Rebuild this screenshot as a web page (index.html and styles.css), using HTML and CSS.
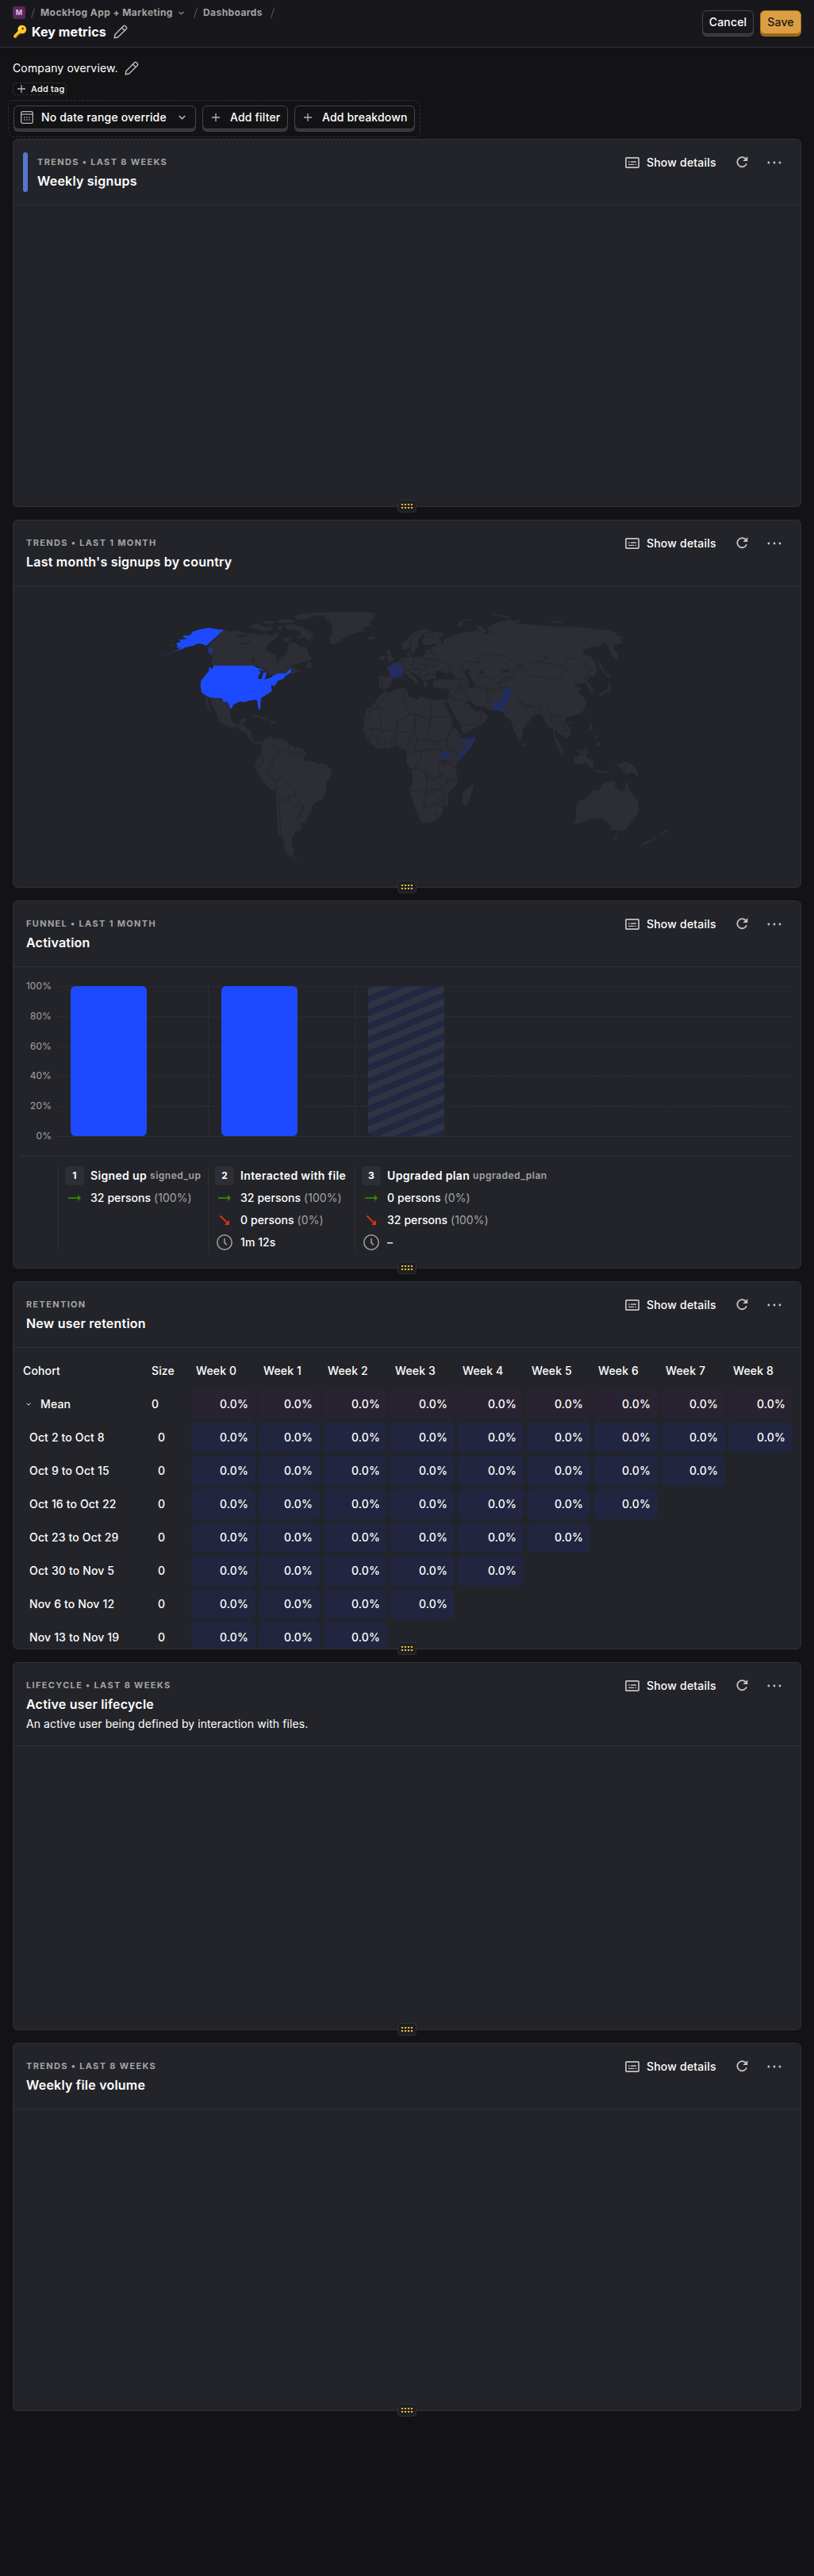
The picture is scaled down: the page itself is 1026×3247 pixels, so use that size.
FILE: index.html
```html
<!DOCTYPE html>
<html lang="en">
<head>
<meta charset="utf-8">
<title>Key metrics</title>
<link rel="stylesheet" href="styles.css">
</head>
<body>
<svg class="defs" width="0" height="0">
  <symbol id="pencil" viewBox="0 0 18 18"><path d="M1.2 16.8 2 12.4 12.6 1.8a1.6 1.6 0 0 1 2.2 0l1.4 1.4a1.6 1.6 0 0 1 0 2.2L5.6 16 1.2 16.8ZM10.4 4l3.6 3.6" fill="none" stroke="currentColor" stroke-width="1.4" stroke-linejoin="round"/></symbol>
  <symbol id="plus" viewBox="0 0 10 10"><path d="M5 0v10M0 5h10" stroke="currentColor" stroke-width="1.3"/></symbol>
  <symbol id="chevron" viewBox="0 0 8 5"><path d="m.7.7 3.3 3.3L7.3.7" fill="none" stroke="currentColor" stroke-width="1.3"/></symbol>
  <symbol id="calendar" viewBox="0 0 16 16"><rect x=".7" y=".7" width="14.6" height="14.6" rx="1.8" fill="none" stroke="currentColor" stroke-width="1.3"/><path d="M1 4h14" stroke="currentColor" stroke-width="1.2"/><path d="M7.2 8h1.4M10.4 8h1.4M4 11h1.4M7.2 11h1.4M10.4 11h1.4M4 8h1.4" stroke="currentColor" stroke-width="1.4"/></symbol>
  <symbol id="details" viewBox="0 0 18 14"><rect x=".9" y=".9" width="16.2" height="12.2" rx="1" fill="none" stroke="currentColor" stroke-width="1.7"/><path d="M4 6h1.6M7 6h7M4 9.4h7M12.2 9.4H14" stroke="currentColor" stroke-width="1.4"/></symbol>
  <symbol id="refresh" viewBox="0 0 15 15"><path d="M13 9.2A6 6 0 1 1 11.8 3.2" fill="none" stroke="currentColor" stroke-width="1.8"/><path d="M14.3 0v6H8.4Z" fill="currentColor"/></symbol>
  <symbol id="dots" viewBox="0 0 18 4"><g fill="currentColor"><circle cx="1.9" cy="2" r="1.4"/><circle cx="9" cy="2" r="1.4"/><circle cx="16" cy="2" r="1.4"/></g></symbol>
  <symbol id="right" viewBox="0 0 16 8"><path d="M0 4h13" stroke="currentColor" stroke-width="1.8"/><path d="m12 0 4 4-4 4Z" fill="currentColor"/></symbol>
  <symbol id="down" viewBox="0 0 12 12"><path d="m.5.5 9 9" stroke="currentColor" stroke-width="1.9"/><path d="M12 6v6H6Z" fill="currentColor"/></symbol>
  <symbol id="clock" viewBox="0 0 20 20"><circle cx="10" cy="10" r="9.2" fill="none" stroke="currentColor" stroke-width="1.5"/><path d="M10 5v5.4l2.8 2.8" fill="none" stroke="currentColor" stroke-width="1.5"/></symbol>
  <symbol id="grip" viewBox="0 0 16 6"><path d="M0 .5h16M0 4.5h16" stroke="#46413a"/><path fill="#f7b72e" d="M1 0h2v2H1zM5 0h2v2H5zM9 0h2v2H9zM13 0h2v2h-2zM1 4h2v2H1zM5 4h2v2H5zM9 4h2v2H9zM13 4h2v2h-2z"/></symbol>
</svg>

<header class="top">
  <div class="top-left">
    <nav class="crumbs">
      <span class="project">M</span><i class="slash s1"></i><span class="c1">MockHog App + Marketing</span><svg class="chev"><use href="#chevron"/></svg><i class="slash s2"></i><span class="c2">Dashboards</span><i class="slash s3"></i>
    </nav>
    <h1 class="title"><span class="key">🔑</span><span class="title-text">Key metrics</span><svg class="pencil"><use href="#pencil"/></svg></h1>
  </div>
  <div class="top-actions"><button class="btn cancel">Cancel</button><button class="btn save">Save</button></div>
</header>

<main class="page">
  <div class="description"><span class="desc-text">Company overview.</span><svg class="pencil"><use href="#pencil"/></svg></div>
  <div class="tag"><svg><use href="#plus"/></svg><span>Add tag</span></div>
  <div class="filters">
    <button class="btn date"><svg class="cal"><use href="#calendar"/></svg><span>No date range override</span><svg class="chev"><use href="#chevron"/></svg></button>
    <button class="btn filter"><svg class="plus"><use href="#plus"/></svg><span>Add filter</span></button>
    <button class="btn breakdown"><svg class="plus"><use href="#plus"/></svg><span>Add breakdown</span></button>
  </div>

  <section class="card">
    <div class="head"><i class="ribbon"></i><div class="meta ribboned"><h5>Trends • Last 8 weeks</h5><h4>Weekly signups</h4></div>
      <div class="tools"><svg class="i-details"><use href="#details"/></svg><span>Show details</span><svg class="i-refresh"><use href="#refresh"/></svg><svg class="i-dots"><use href="#dots"/></svg></div></div>
    <div class="grip"><svg><use href="#grip"/></svg></div>
  </section>

  <section class="card">
    <div class="head"><div class="meta"><h5>Trends • Last 1 month</h5><h4>Last month's signups by country</h4></div>
      <div class="tools"><svg class="i-details"><use href="#details"/></svg><span>Show details</span><svg class="i-refresh"><use href="#refresh"/></svg><svg class="i-dots"><use href="#dots"/></svg></div></div>
    <svg class="map" viewBox="-549 -33 2976 1137">
      <g class="land">
        <!-- Canada -->
        <path d="M246 132 270 138 285 133 310 136 330 148 360 146 385 152 400 145 420 152 440 150 445 138 455 150 440 165 420 180 407 195 405 208 425 218 446 226 444 246 452 253 462 235 480 225 492 205 488 190 498 178 515 180 530 188 537 200 552 192 562 205 565 225 582 238 570 248 540 255 520 262 500 268 505 275 522 272 518 282 545 285 520 292 505 300 501 280 490 285 480 296 450 297 435 300 415 310 412 292 400 280 370 268H207L196 252 204 240 200 210 188 196Z"/>
        <path d="M342 120 365 108 385 112 400 120 425 118 435 128 415 137 390 136 375 128 358 130ZM385 105 410 97 432 98 440 106 415 110ZM440 100 470 92 500 92 520 98 500 105 460 106ZM510 80 545 70 600 66 625 68 600 78 570 86 545 94 520 90ZM480 112 515 112 545 122 575 140 590 152 575 158 580 170 565 172 552 160 530 165 520 158 540 150 530 138 510 130 490 132 475 122ZM445 120 465 115 470 128 455 133ZM468 165 490 160 500 172 480 177ZM560 262 572 250 582 270 568 275 555 272ZM525 75 560 70 590 72 560 80Z"/>
        <!-- Greenland and Iceland -->
        <path d="M580 72 625 66 700 64 780 63 820 70 812 90 795 105 805 112 785 120 765 130 782 134 740 145 715 155 695 165 680 180 662 187 648 180 646 165 652 150 660 138 650 130 656 115 648 98 632 92 625 80ZM785 160 800 156 820 156 822 163 803 170 792 167Z"/>
        <!-- Mexico, Central America, Caribbean -->
        <path d="M190 386 215 390 240 392 247 405 262 402 272 428 270 455 278 478 290 487 305 485 312 470 334 464 328 480 318 490 335 505 350 510 350 530 355 548 370 557 385 553 388 560 372 563 362 560 340 540 328 520 308 512 300 502 280 500 250 492 225 475 222 455 207 430 198 405ZM175 384 184 387 190 415 200 447 190 438 178 405ZM348 459 370 453 390 460 412 473 400 473 378 460ZM418 477 440 480 448 484 425 487Z"/>
        <!-- South America -->
        <path d="M388 560 400 545 418 535 430 537 440 543 465 542 490 555 497 568 515 577 542 578 557 600 548 622 558 632 572 625 600 638 630 640 645 652 655 665 652 685 635 705 632 740 625 760 617 775 590 785 578 800 578 820 565 840 557 862 535 862 528 852 543 880 533 892 512 893 517 908 502 920 508 940 500 955 515 960 505 990 490 985 475 960 465 920 456 910 450 890 447 830 445 770 440 745 405 720 385 690 363 652 370 620 388 600 390 575ZM500 988 520 998 538 1006 515 1002Z"/>
        <!-- Africa -->
        <path d="M855 362 872 368 900 354 938 352 940 365 945 372 942 384 962 388 975 397 990 385 1005 388 1035 396 1085 397 1092 408 1078 404 1098 445 1108 478 1115 500 1135 520 1148 540 1165 545 1198 534 1195 550 1180 575 1160 600 1135 627 1120 650 1128 680 1130 712 1115 730 1095 750 1094 770 1095 795 1077 802 1070 830 1050 850 1035 858 995 862 985 840 970 810 955 760 950 735 962 700 955 660 938 640 937 600 935 585 915 580 900 570 870 578 825 582 800 560 775 520 770 510 778 490 775 460 790 430 805 420 820 405 830 385 845 375ZM1188 708 1190 725 1170 790 1155 798 1147 785 1152 740 1175 728Z"/>
        <!-- Eurasia -->
        <path d="M845 356 833 345 835 325 830 309 845 305 875 312 872 292 862 270 875 268 882 262 896 255 910 250 920 238 945 234 940 220 950 215 952 232 965 235 1000 232 1010 222 1012 208 1030 206 1028 198 1060 190 1050 188 1042 178 1048 172 1035 150 1040 138 1060 140 1085 150 1070 155 1055 152 1065 165 1072 180 1060 182 1075 188 1078 168 1095 162 1120 150 1150 142 1200 135 1220 142 1197 118 1205 114 1225 122 1240 135 1225 150 1248 142 1262 146 1240 128 1255 118 1275 108 1300 98 1325 92 1345 98 1370 94 1355 112 1385 110 1450 115 1500 120 1540 118 1600 123 1650 130 1700 132 1730 145 1742 158 1765 160 1745 168 1757 178 1725 190 1720 200 1737 228 1737 250 1710 222 1700 195 1690 180 1660 198 1640 195 1610 205 1602 226 1630 230 1650 250 1658 285 1648 305 1630 310 1618 325 1635 345 1647 360 1635 368 1620 345 1613 330 1600 335 1575 335 1570 345 1590 348 1598 355 1590 370 1617 400 1612 430 1592 450 1560 460 1545 460 1535 475 1555 505 1557 530 1540 545 1530 532 1512 525 1498 505 1500 535 1517 565 1532 595 1525 603 1508 575 1498 550 1490 500 1475 500 1460 475 1450 455 1435 450 1412 458 1400 480 1378 505 1375 540 1365 557 1345 515 1330 470 1315 465 1300 440 1255 435 1225 420 1200 420 1172 395 1168 400 1185 430 1205 440 1215 436 1225 440 1247 460 1230 485 1200 500 1155 525 1147 515 1140 490 1115 450 1090 400 1095 385 1098 356 1070 352 1040 350 1036 328 1060 320 1030 315 1012 322 1015 350 1003 345 1002 330 990 312 975 300 955 292 958 302 985 325 975 338 965 325 945 308 930 295 922 304 895 312 882 318 882 330 870 347 860 354Z"/>
        <!-- Scandinavia and northern islands -->
        <path d="M920 205 922 182 945 165 960 145 985 133 1015 130 1035 138 1035 155 1048 172 1038 186 1000 190 996 172 1008 155 998 150 982 168 982 190 970 212 958 222 950 198 935 206ZM1128 115 1140 98 1180 90 1190 93 1150 102 1142 125ZM1260 70 1330 82 1320 86 1270 78ZM1480 97 1530 98 1520 106 1485 103Z"/>
        <!-- British Isles -->
        <path d="M862 208 876 206 872 216 880 230 890 240 885 250 860 254 872 245 862 236 870 228 862 222ZM838 232 855 230 854 245 835 250Z"/>
        <!-- Asian islands -->
        <path d="M1650 238 1675 265 1692 295 1710 305 1700 312 1685 300 1665 265ZM1700 325 1712 350 1710 362 1690 368 1672 385 1665 375 1685 362 1698 355ZM1622 435 1627 442 1622 457ZM1552 480 1562 478 1560 486 1554 487ZM1378 555 1392 565 1388 573 1380 570ZM1578 578 1600 592 1635 630 1645 655 1630 652 1600 615ZM1640 660 1680 666 1712 672 1700 676 1655 668ZM1568 615 1590 605 1612 575 1625 590 1615 610 1610 635 1600 642 1575 635ZM1632 630 1650 625 1640 638 1648 652 1638 650 1632 655ZM1628 485 1640 490 1640 510 1630 508ZM1655 560 1668 552 1672 570 1660 572ZM1645 525 1662 540 1655 548ZM1730 642 1745 638 1760 630 1790 640 1805 655 1818 690 1800 678 1785 670 1770 682 1755 665ZM1708 623 1720 622 1718 632Z"/>
        <!-- Australia and New Zealand -->
        <path d="M1770 698 1780 735 1788 750 1812 780 1816 805 1810 830 1785 860 1765 888 1740 893 1728 888 1710 890 1705 865 1690 855 1675 842 1640 845 1615 855 1590 865 1570 863 1578 845 1577 800 1585 782 1620 765 1640 742 1650 735 1665 742 1675 718 1690 710 1710 700 1728 705 1725 725 1750 745 1762 738ZM1720 912 1737 912 1735 918 1720 928ZM1915 885 1925 892 1905 908 1895 912 1905 898ZM1885 912 1882 918 1840 945 1825 947 1830 940 1860 925Z"/>
      </g>
      <!-- Inland seas -->
      <path class="sea" d="M1045 300 1055 285 1075 288 1082 298 1105 292 1128 312 1130 318 1090 320 1050 318ZM1150 285 1175 280 1182 290 1168 292 1185 320 1198 335 1195 350 1175 350 1170 325ZM1213 290 1225 282 1227 295 1215 300ZM1460 222 1470 238 1455 248 1447 250 1462 238ZM1295 288 1328 282 1328 288 1300 295ZM298 152 335 150 320 158 300 160ZM305 185 350 175 345 182 315 188ZM355 238 365 233 360 258 353 255ZM1073 628 1092 620 1090 632 1075 640ZM1096 688 1094 720 1088 710Z"/>
      <g class="hot">
        <path d="M246 132 180 192 168 186 150 183 130 192 100 198 90 204 70 210 72 206 84 200 66 198 73 192 65 182 85 178 75 170 110 165 92 160 95 154 118 152 130 138 155 130 190 124 215 128Z"/>
        <path d="M207 267H358L372 275 385 278 409 290 405 312 398 320 425 312 435 303 450 297 480 296 490 285 501 280V293L480 305 472 317 450 325 447 332 438 345 425 340 428 362 420 370 400 382 387 390 385 412 385 430 378 434 374 412 373 398 362 396 340 400 325 405 308 403 290 410 280 417 278 429 270 428 265 410 255 402 247 407 238 389 215 390 185 385 178 380 162 368 158 345 160 325 175 305 190 287 190 272 204 280Z"/>
        <path d="M186 196 193 205 202 195 203 220 194 225 187 212ZM70 208 50 216 48 219 70 212ZM42 218 28 223 28 225 42 221ZM22 226 12 229 12 231 22 228ZM46 190 56 190 56 193 46 193Z" class="islands"/>
      </g>
      <path class="sea" d="M375 283 405 287 409 292 396 294 388 318 378 318 376 308 386 292ZM402 318 408 295 412 302 428 302 425 308Z"/>
      <path class="warm" d="M862 270 875 268 882 262 896 255 908 264 928 270 923 285 920 300 923 307 908 312 895 309 875 312 872 292ZM1257 407 1285 404 1305 380 1310 355 1328 353 1335 368 1328 375 1330 388 1320 405 1305 418 1312 440 1300 443 1290 434 1257 434 1262 420ZM1146 540 1165 545 1198 534 1195 550 1180 575 1160 600 1137 627 1135 595 1160 580 1178 562 1158 555ZM1072 592 1093 589 1098 605 1090 615 1065 624 1066 605ZM932 313h3v6h-3ZM1810 168h8v3h-8Z"/>
      <g class="borders">
        <path d="M388 610 410 620 432 640 430 650 412 660 415 685 442 700 443 745M432 640 433 605 450 600M420 540 415 555 425 570 450 575 452 600 470 610 475 590 495 582 490 562M495 582 502 605 520 602 545 600M515 577 516 600M533 580 532 600M442 700 460 690 495 718 518 745 515 760 495 758 490 775 462 775M445 745 460 778 455 810 460 860 462 915 478 950M490 775 515 795 545 815 540 790 518 770 515 758M545 815 528 840 530 855M545 790 548 810 532 830 558 850M370 650 382 652 398 630 385 612M290 500 300 490 318 490M328 515 350 508"/>
        <path d="M870 368 862 385 828 405 825 415 903 478 950 450 930 400 926 370M775 460 795 460 802 432 825 430V415M825 415 838 440 840 508 800 508 776 500M903 478 898 510 850 515 830 540 805 530 800 510M898 518 960 520 968 480 972 450 950 450M972 450 1028 475V395M1028 460 1098 460M1028 475 1018 510 1022 545 1040 555 1090 550 1088 530 1100 530 1112 485M968 480 970 530 980 548 1018 545M960 520 940 575M900 520 895 570M877 545V575M886 540V570M858 545 855 578M828 545 826 570M805 530 795 545 805 560M980 548 970 570 972 590 938 600M972 590 995 590 990 620 970 650 955 658M995 590 1018 582 1050 582 1072 590M1040 555 1070 582M1090 550 1092 588 1120 588 1135 595M1100 520 1090 550M1115 520 1148 540M1120 588 1118 600M1065 625 1060 655 1065 680 1052 700 1030 695 1012 690 1010 670 985 658 955 658M1015 672 1012 738 952 742M1065 628 1095 632 1122 650M1065 680 1092 690 1090 700 1130 698M1052 680 1085 712 1060 735 1012 738M1040 740 1022 748 1005 750 1002 810M1002 805 1035 795 1075 775 1082 740 1060 735M1035 745 1060 770 1080 780 1075 802M980 820 1002 820M1050 822 1058 828 1048 838 1042 830 1050 822M1066 805 1075 806"/>
        <path d="M832 320 848 320 842 350M923 305 935 282 928 268 920 245M935 290 965 280 1010 285M963 235 965 265 950 262 980 278M1000 235 1015 255 1010 265 975 260M985 290 1000 310 1020 300M1008 275 1020 300 1045 302M1010 265 1050 270M1012 240 1055 245 1045 222 1015 218M1030 205 1035 222M1055 245 1105 265 1100 290M1010 318 1000 325M1035 325 1010 322M950 200 955 170 985 145 1000 148 1010 140 1030 142 1038 155M1138 320 1140 345 1100 355M1098 380 1130 365 1140 345 1158 370 1168 395M1098 385 1145 400 1200 425M1145 500 1155 492 1200 488 1220 470 1218 445M1130 315 1165 325M1148 335 1172 350 1200 345 1245 362 1243 400 1260 406M1245 362 1290 350 1310 352M1147 285 1145 265 1160 250 1210 255 1212 235 1250 222 1310 232 1350 262 1365 265 1350 290 1340 310 1300 318 1285 335 1260 320 1230 305 1203 310M1202 325 1245 360M1290 348 1280 330 1320 325 1340 310M1310 352 1320 345M1335 360 1355 380 1365 405 1410 420 1440 420 1460 408 1475 420 1480 450 1500 455M1370 400 1375 415 1415 428M1420 425 1430 450M1445 425 1440 450M1365 265 1380 262 1425 250 1500 262 1530 275 1555 280 1530 295 1520 310 1490 318 1440 310 1400 302 1380 280 1370 265M1540 262 1538 238 1570 240 1600 262 1632 275 1625 300 1608 325M1480 450 1488 490M1500 455 1520 460 1540 455M1495 460 1505 490 1530 492 1540 515 1520 520M1515 465 1540 500 1550 520M1765 640V680M1576 612 1600 605 1615 590"/>
      </g>
    </svg>
    <div class="grip"><svg><use href="#grip"/></svg></div>
  </section>

  <section class="card">
    <div class="head"><div class="meta"><h5>Funnel • Last 1 month</h5><h4>Activation</h4></div>
      <div class="tools"><svg class="i-details"><use href="#details"/></svg><span>Show details</span><svg class="i-refresh"><use href="#refresh"/></svg><svg class="i-dots"><use href="#dots"/></svg></div></div>
    <div class="funnel">
      <div class="chart">
        <div class="axis"><span>100%</span><span>80%</span><span>60%</span><span>40%</span><span>20%</span><span>0%</span></div>
        <div class="plot">
          <div class="bar-col"><div class="bar"></div></div>
          <div class="bar-col"><div class="bar"></div></div>
          <div class="bar-col"><div class="bar empty"></div></div>
          <svg class="grid" width="925" height="190"><path d="M0 .5h925M0 38.5h925M0 76.5h925M0 113.5h925M0 151.5h925M189.5 0v190M374.5 0v190" stroke-dasharray="3 2"/><path d="M0 189.5h925"/></svg>
        </div>
      </div>
      <div class="legend">
        <div></div>
        <div class="step"><p><b class="num">1</b><strong>Signed up</strong><code>signed_up</code></p><p><svg class="right"><use href="#right"/></svg>32 persons <em>(100%)</em></p></div>
        <div class="step"><p><b class="num">2</b><strong>Interacted with file</strong></p><p><svg class="right"><use href="#right"/></svg>32 persons <em>(100%)</em></p><p><svg class="down"><use href="#down"/></svg>0 persons <em>(0%)</em></p><p><svg class="clock"><use href="#clock"/></svg>1m 12s</p></div>
        <div class="step"><p><b class="num">3</b><strong>Upgraded plan</strong><code>upgraded_plan</code></p><p><svg class="right"><use href="#right"/></svg>0 persons <em>(0%)</em></p><p><svg class="down"><use href="#down"/></svg>32 persons <em>(100%)</em></p><p><svg class="clock"><use href="#clock"/></svg>–</p></div>
      </div>
    </div>
    <div class="grip"><svg><use href="#grip"/></svg></div>
  </section>

  <section class="card">
    <div class="head"><div class="meta"><h5>Retention</h5><h4>New user retention</h4></div>
      <div class="tools"><svg class="i-details"><use href="#details"/></svg><span>Show details</span><svg class="i-refresh"><use href="#refresh"/></svg><svg class="i-dots"><use href="#dots"/></svg></div></div>
    <div class="retention">
      <div class="row labels"><span>Cohort</span><span>Size</span><span>Week 0</span><span>Week 1</span><span>Week 2</span><span>Week 3</span><span>Week 4</span><span>Week 5</span><span>Week 6</span><span>Week 7</span><span>Week 8</span></div>
      <div class="row mean"><span><svg class="chev"><use href="#chevron"/></svg>Mean</span><span>0</span><b>0.0%</b><b>0.0%</b><b>0.0%</b><b>0.0%</b><b>0.0%</b><b>0.0%</b><b>0.0%</b><b>0.0%</b><b>0.0%</b></div>
      <div class="row"><span>Oct 2 to Oct 8</span><span>0</span><b>0.0%</b><b>0.0%</b><b>0.0%</b><b>0.0%</b><b>0.0%</b><b>0.0%</b><b>0.0%</b><b>0.0%</b><b>0.0%</b></div>
      <div class="row"><span>Oct 9 to Oct 15</span><span>0</span><b>0.0%</b><b>0.0%</b><b>0.0%</b><b>0.0%</b><b>0.0%</b><b>0.0%</b><b>0.0%</b><b>0.0%</b></div>
      <div class="row"><span>Oct 16 to Oct 22</span><span>0</span><b>0.0%</b><b>0.0%</b><b>0.0%</b><b>0.0%</b><b>0.0%</b><b>0.0%</b><b>0.0%</b></div>
      <div class="row"><span>Oct 23 to Oct 29</span><span>0</span><b>0.0%</b><b>0.0%</b><b>0.0%</b><b>0.0%</b><b>0.0%</b><b>0.0%</b></div>
      <div class="row"><span>Oct 30 to Nov 5</span><span>0</span><b>0.0%</b><b>0.0%</b><b>0.0%</b><b>0.0%</b><b>0.0%</b></div>
      <div class="row"><span>Nov 6 to Nov 12</span><span>0</span><b>0.0%</b><b>0.0%</b><b>0.0%</b><b>0.0%</b></div>
      <div class="row"><span>Nov 13 to Nov 19</span><span>0</span><b>0.0%</b><b>0.0%</b><b>0.0%</b></div>
    </div>
    <div class="grip"><svg><use href="#grip"/></svg></div>
  </section>

  <section class="card">
    <div class="head"><div class="meta"><h5>Lifecycle • Last 8 weeks</h5><h4>Active user lifecycle</h4><p class="sub">An active user being defined by interaction with files.</p></div>
      <div class="tools"><svg class="i-details"><use href="#details"/></svg><span>Show details</span><svg class="i-refresh"><use href="#refresh"/></svg><svg class="i-dots"><use href="#dots"/></svg></div></div>
    <div class="grip"><svg><use href="#grip"/></svg></div>
  </section>

  <section class="card">
    <div class="head"><div class="meta"><h5>Trends • Last 8 weeks</h5><h4>Weekly file volume</h4></div>
      <div class="tools"><svg class="i-details"><use href="#details"/></svg><span>Show details</span><svg class="i-refresh"><use href="#refresh"/></svg><svg class="i-dots"><use href="#dots"/></svg></div></div>
    <div class="grip"><svg><use href="#grip"/></svg></div>
  </section>
</main>
</body>
</html>
```
FILE: styles.css
```css
* { box-sizing: border-box; }
body { margin: 0; min-height: 3247px; background: #131315; color: #fff; font: 14px/20px Inter, "Liberation Sans", sans-serif; letter-spacing: .08px; }
h1, h4, h5, p { margin: 0; }
svg { display: block; flex: none; }
.defs { display: none; }

/* Top bar */
.top { height: 60px; display: flex; justify-content: space-between; padding: 0 16px; background: #18171b; border-bottom: 1px solid #2f2f37; }
.crumbs { display: flex; align-items: center; height: 16px; margin-top: 8px; color: #a3a3a3; font-size: 12px; font-weight: 700; letter-spacing: .43px; white-space: nowrap; }
.project { width: 16px; height: 16px; border-radius: 3px; background: #572a5b; color: #e3b8ea; font-size: 9px; line-height: 16px; text-align: center; letter-spacing: 0; }
.slash { width: 1px; height: 13px; background: #5d5d61; transform: rotate(17deg); }
.s1 { margin: 0 9px 0 9px; }
.s2 { margin: 0 9px 0 14px; }
.s3 { margin-left: 9px; }
.c1 { width: 168px; }
.c2 { width: 78px; }
.crumbs .chev { width: 7px; height: 5px; margin-left: 6px; }
.title { display: flex; align-items: center; height: 24px; margin-top: 4px; font-size: 16px; font-weight: 700; white-space: nowrap; }
.key { width: 24px; font-size: 15px; }
.title-text { width: 95px; }
.pencil { width: 18px; height: 18px; margin-left: 8px; color: #bdbdbf; }
.top-actions { display: flex; gap: 8px; padding-top: 13px; }
.btn { display: flex; align-items: center; height: 30px; padding: 0; border: 1px solid #46464b; border-radius: 6px; background: #18171b; color: #fff; font: 500 14px/20px Inter, sans-serif; letter-spacing: .17px; box-shadow: 0 2px 0 #353538, 0 3px 0 #46464b; white-space: nowrap; }
.top .btn { justify-content: center; }
.cancel { width: 65px; }
.save { width: 52px; background: #dd9e43; border-color: #ad731b; color: #17150f; box-shadow: 0 2px 0 #8d641c, 0 3px 0 #ad731b; }
.top .save { background: #dd9e43; }

/* Dashboard controls */
.page { padding: 16px 16px 0; }
.description { display: flex; align-items: center; height: 20px; }
.desc-text { width: 133px; letter-spacing: .14px; }
.tag { display: flex; align-items: center; width: 68px; height: 16px; margin-top: 8px; padding-left: 5px; border: 1px dashed #35353a; border-radius: 3px; font-size: 11px; font-weight: 500; line-height: 14px; letter-spacing: .2px; white-space: nowrap; }
.tag svg { width: 10px; height: 10px; margin-right: 7px; color: #b5b5b5; }
.filters { display: flex; gap: 8px; width: 520px; height: 47px; margin: 6px 0 2px -6px; padding: 6px; border: 1px dashed #2f2f35; border-radius: 8px; }
.filters .btn { background: #131315; }
.date { width: 230px; }
.date .cal { width: 16px; height: 16px; margin: 0 10px 0 8px; color: #b8b8ba; }
.date span { width: 165px; text-align: left; }
.date .chev { width: 9px; height: 6px; margin-left: 8px; color: #c0c0c2; }
.filter { width: 108px; }
.breakdown { width: 152px; }
.filters .plus { width: 10px; height: 10px; margin: 0 13px 0 11px; color: #b5b5b5; }

/* Insight cards */
.card { position: relative; height: 464px; margin-bottom: 16px; border: 1px solid #2f3036; border-radius: 6px; background: #232429; }
.head { display: flex; justify-content: space-between; min-height: 83px; padding: 16px 24px 0 16px; border-bottom: 1px solid #2f3036; }
.ribbon { width: 6px; height: 50px; margin-left: -4px; border-radius: 3px; background: #5776cf; }
.meta { flex: 1; padding-top: 4px; }
.ribboned { padding-left: 12px; }
h5 { height: 17px; color: #a3a3a3; font-size: 11px; line-height: 17px; font-weight: 700; letter-spacing: 1.33px; text-transform: uppercase; white-space: nowrap; }
h4 { height: 24px; margin-top: 3px; font-size: 16px; line-height: 24px; font-weight: 600; letter-spacing: .22px; white-space: nowrap; }
.sub { height: 20px; margin: 3px 0 17px; white-space: nowrap; }
.tools { display: flex; align-items: center; height: 25px; font-weight: 500; color: #fff; letter-spacing: .2px; }
.tools svg { color: #c4c4c6; }
.tools span { width: 90px; margin-left: 9px; white-space: nowrap; }
.i-details { width: 18px; height: 14px; }
.i-refresh { width: 15px; height: 15px; margin-left: 23px; }
.i-dots { width: 18px; height: 4px; margin-left: 24px; }
.grip { position: absolute; left: 484px; top: 454px; width: 24px; height: 16px; padding: 4px 3px; border: 1px solid #2f3036; border-radius: 4px; background: #1e1f23; }
.grip svg { width: 16px; height: 6px; }

/* World map */
.map { width: 992px; height: 379px; }
.land { fill: #2d2e35; }
.sea { fill: #232429; }
.hot { fill: #1d4aff; }
.islands { opacity: .45; }
.warm { fill: #222c60; }
.borders { fill: none; stroke: #232429; stroke-width: 2.6; stroke-linejoin: round; }

/* Funnel */
.funnel { padding: 24px 11px 0 8px; }
.chart { display: flex; height: 190px; }
.axis { display: flex; flex-direction: column; width: 48px; padding-right: 8px; text-align: right; font-size: 12px; line-height: 20px; color: #a3a3a3; margin-top: -10px; gap: 17.8px; }
.axis span { height: 20px; }
.plot { position: relative; display: grid; grid-template-columns: 190px 185px 550px; width: 925px; }
.bar-col { z-index: 1; padding-left: 16px; }
.bar { width: 96px; height: 189px; border-radius: 6px; background: #1d4aff; }
.bar.empty { background: repeating-linear-gradient(-22.5deg, #222742 0 8px, #2f3343 8px 16px); }
.grid { position: absolute; inset: 0; z-index: 0; fill: none; stroke: #303137; }
.legend { display: grid; grid-template-columns: 48px 189px 185px 1fr; margin-top: 24px; padding-top: 12px; border-top: 1px solid #2f3036; }
.step { height: 108px; padding-left: 8px; border-left: 1px solid #2f3036; }
.step p { display: flex; align-items: center; height: 24px; margin-bottom: 4px; white-space: pre; font-weight: 500; }
.num { width: 24px; height: 24px; margin-right: 8px; border-radius: 4px; background: #2d2e36; font-size: 12px; line-height: 24px; text-align: center; }
.step strong { font-weight: 600; letter-spacing: .35px; }
.step code { margin-left: 4px; color: #a3a3a3; font: 600 12px/20px Inter, sans-serif; letter-spacing: .5px; }
.step em { color: #a3a3a3; font-style: normal; font-weight: 400; }
.right { width: 16px; height: 8px; margin: 0 12px 0 4px; color: #388600; }
.down { width: 12px; height: 12px; margin: 0 14px 0 6px; color: #db3707; }
.clock { width: 20px; height: 20px; margin: 0 10px 0 2px; color: #a3a3a3; }

/* Retention table */
.retention { height: 379px; padding: 8px 10px 0 8px; overflow: hidden; letter-spacing: .15px; }
.row { display: grid; grid-template-columns: 162px 54px 85px 81px 85px 85px 87px 84px 85px 85px 85px; height: 42px; line-height: 38px; font-weight: 500; white-space: nowrap; }
.row > span:first-child { padding-left: 12px; }
.row > span:nth-child(2) { padding-left: 12px; }
.row b { height: 38px; margin-right: 4px; padding-right: 9px; border-radius: 6px; background: #22253f; text-align: right; font-weight: 500; }
.mean b { background: #292331; }
.labels { height: 44px; line-height: 42px; }
.labels > span { padding-left: 6px; }
.row.labels > span:nth-child(-n+2), .row.mean > span:nth-child(2) { padding-left: 4px; }
.mean > span { display: flex; align-items: center; height: 38px; }
.row.mean > span:first-child { padding-left: 8px; }
.mean .chev { width: 6px; height: 4px; margin-right: 12px; }
```
